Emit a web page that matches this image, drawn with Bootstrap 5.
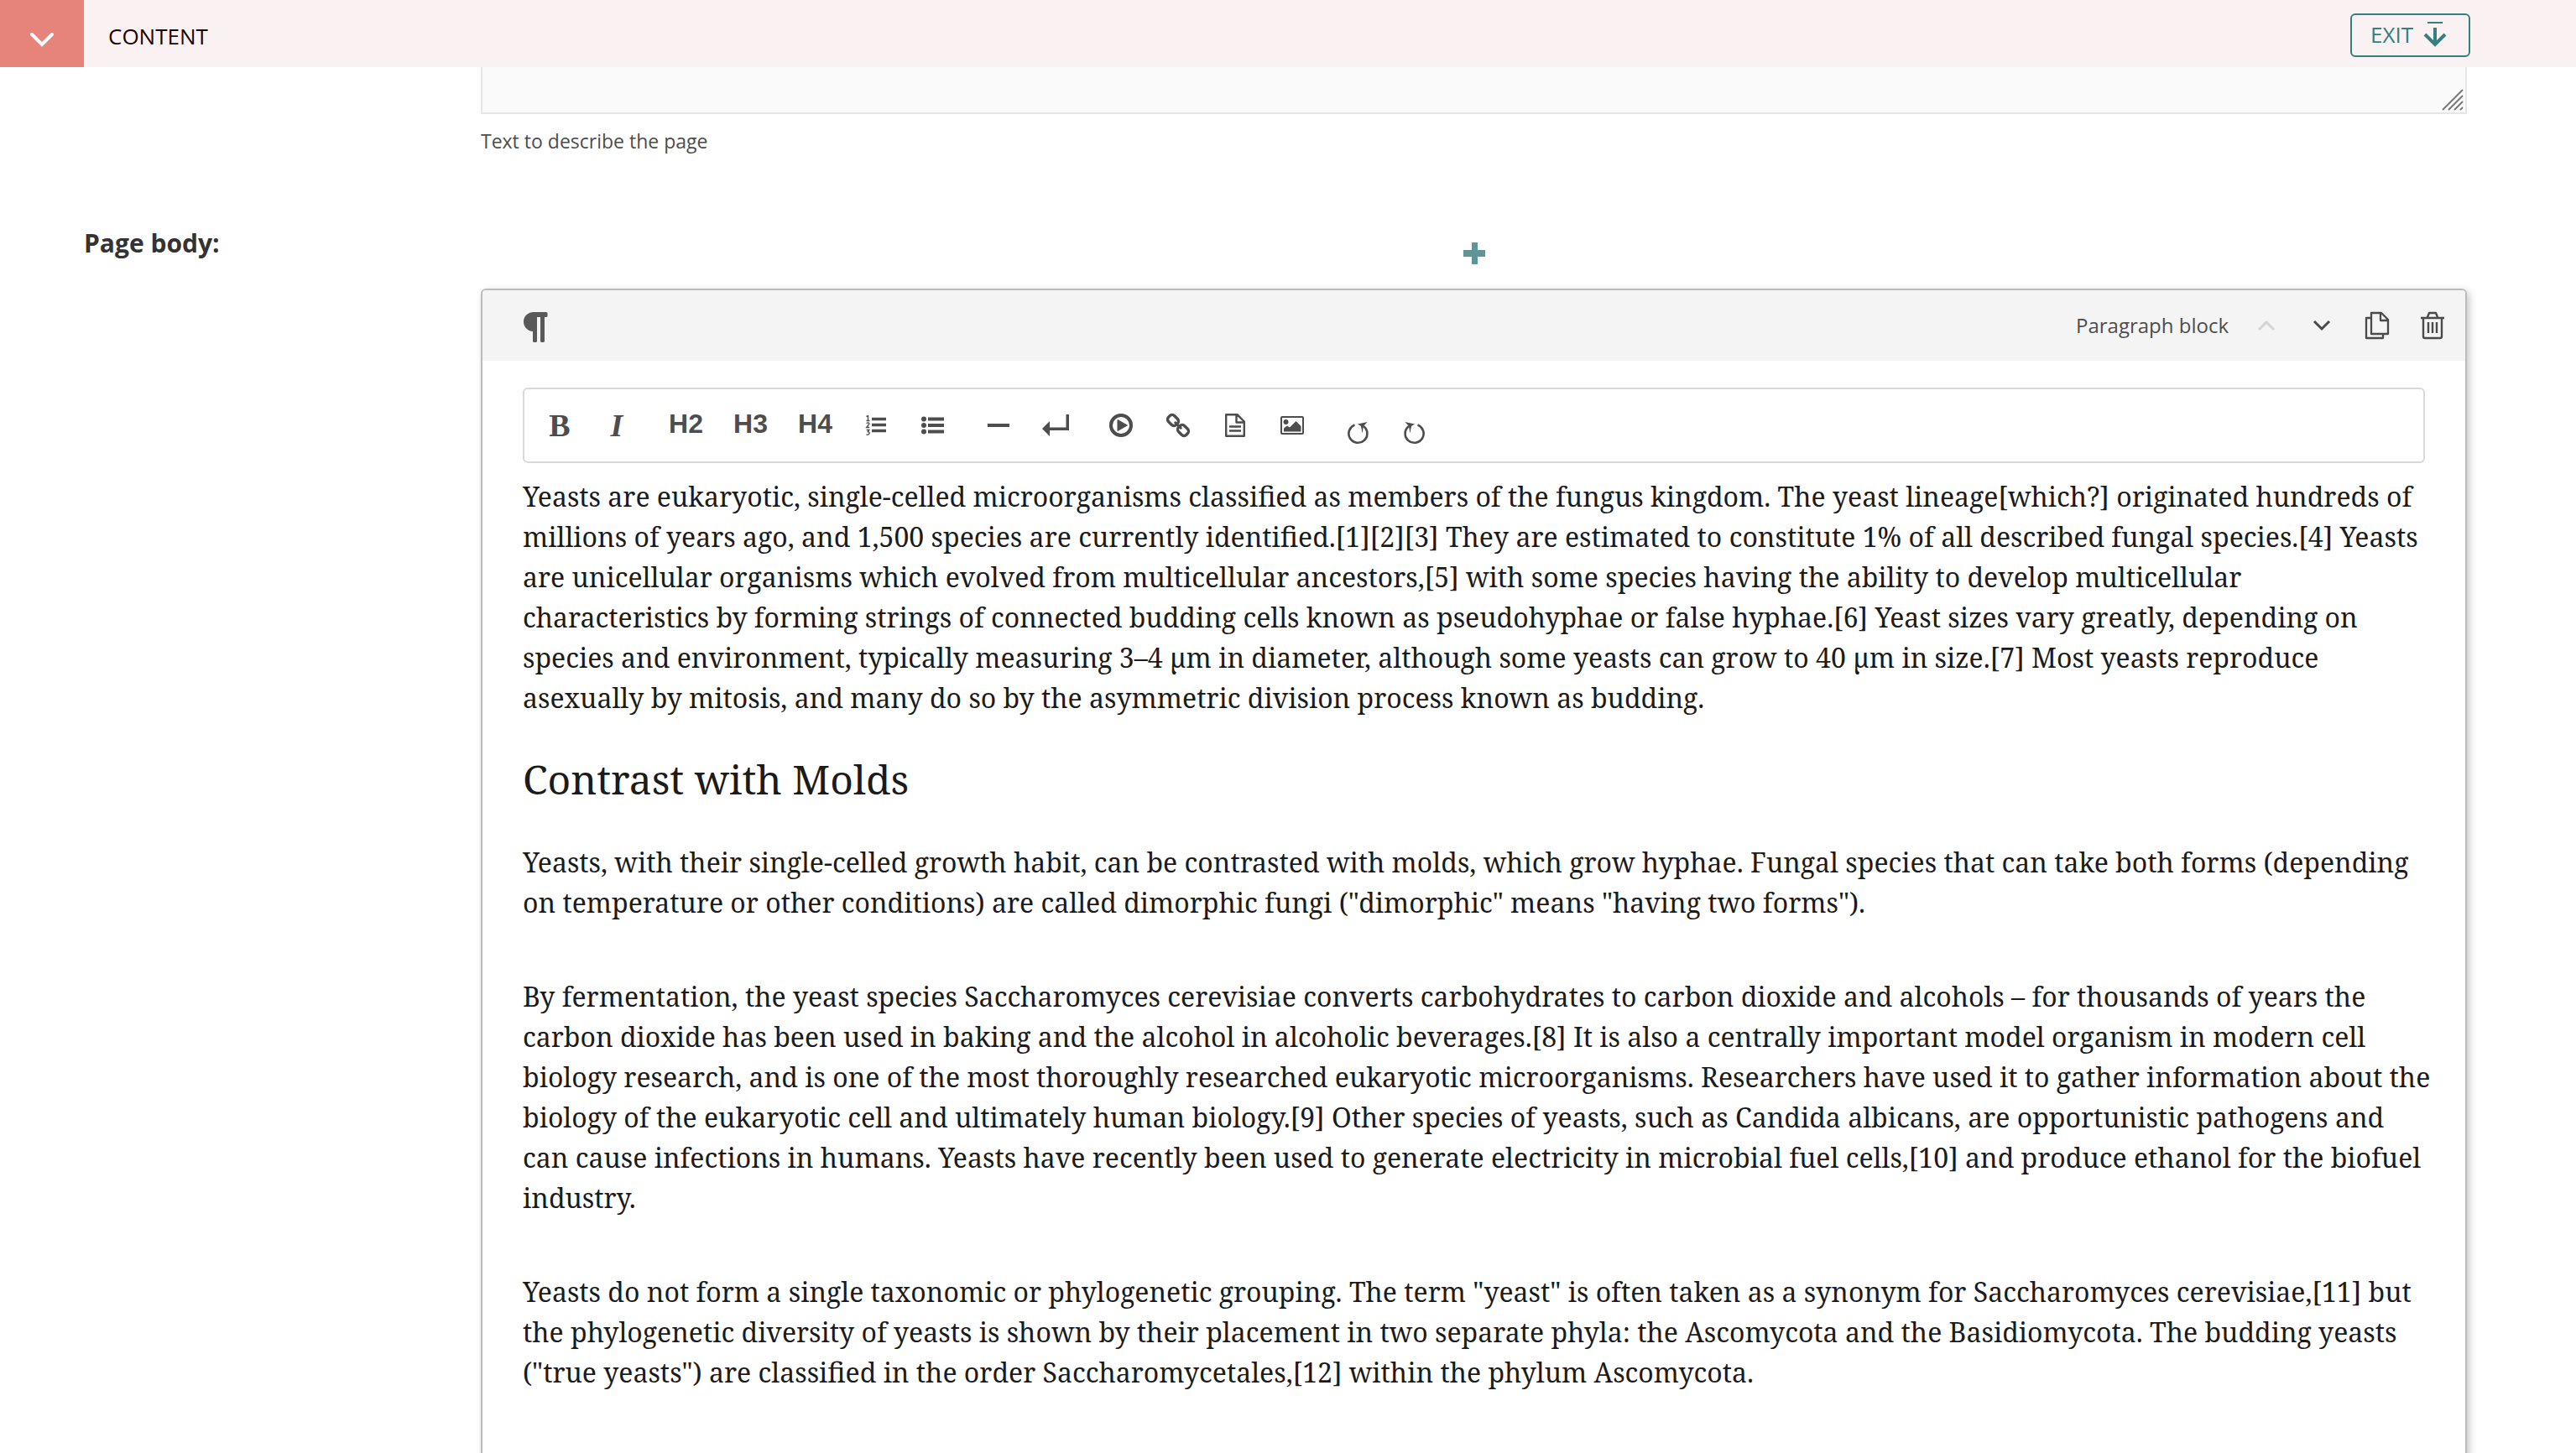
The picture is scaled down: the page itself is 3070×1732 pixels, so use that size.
<!DOCTYPE html>
<html lang="en">
<head>
<meta charset="utf-8">
<meta name="viewport" content="width=device-width, initial-scale=1">
<title>Edit page: Content</title>
<link rel="stylesheet" href="https://cdn.jsdelivr.net/npm/bootstrap@5.3.0/dist/css/bootstrap.min.css">
<style>
  body { font-family: "Open Sans", sans-serif; font-size: 24px; line-height: 36px; color: #4d4d4d; background: #fff; height: 100vh; overflow: hidden; }
  svg { display: block; overflow: visible; }
  .panel-bar { height: 80px; background: #faf1f2; padding-right: 126px; }
  .panel-toggle { --bs-btn-bg: #e6847b; --bs-btn-color: #fff; --bs-btn-hover-bg: #e6847b; --bs-btn-hover-color: #fff; --bs-btn-active-bg: #d9776e; --bs-btn-active-color: #fff; width: 100px; }
  .panel-title { font-size: 26px; color: #1f0300; margin-left: 29px; padding-top: 6px; }
  .exit-btn { --bs-btn-color: #347f80; --bs-btn-border-color: #347f80; --bs-btn-hover-bg: #347f80; --bs-btn-hover-border-color: #347f80;
    height: 52px; border-width: 2px; border-radius: 6px; padding: 0 26px 2px 22px; font-size: 26px; gap: 12px; }
  .editor { padding: 36px 130px 0 100px; }
  .field-label { flex: 0 0 473px; font-size: 30px; line-height: 44px; font-weight: 700; color: #333; }
  .field-main { flex: 1 1 0; min-width: 0; }
  .desc-input { height: 100px; background: #fafafa; border: 2px solid #e6e6e6; border-radius: 0; resize: none; }
  .grip { right: 4px; bottom: 4px; }
  .help { font-size: 23px; margin-top: 14px; }
  .body-row { margin-top: 82px; }
  .add-btn { height: 68px; margin-bottom: 8px; color: #5f9596; }
  .block-card { border: 2px solid #bbb; border-radius: 6px; box-shadow: 3px 3px 10px rgba(0,0,0,.22); padding-bottom: 24px; }
  .block-head { height: 84px; background: #f4f4f4; padding: 0 6px 0 48px; border-radius: 4px 4px 0 0; }
  .head-btn { width: 66px; height: 66px; color: #4a4a4a; }
  .head-btn:disabled { color: #d4d4d4; border: 0; opacity: 1; }
  .block-name { margin-right: 12px; }
  .block-main { padding: 32px 48px 0; }
  .tools { height: 90px; border: 2px solid #d9d9d9; border-radius: 6px; padding: 0 8px; }
  .tool-group { margin-right: 10px; }
  .tool { width: 68px; height: 60px; color: #4d4d4d; }
  .tool-wide { width: 77px; font: 700 32px/40px "Liberation Sans", sans-serif; }
  .tool-serif { font: 700 38px/44px "Liberation Serif", serif; }
  .tool, .head-btn, .add-btn, .panel-toggle { padding: 0; border: 0; border-radius: 0; }
  .tool-wide { padding-bottom: 4px; }
  .prose { font-family: "Roboto Slab", "Noto Serif", "DejaVu Serif Condensed", serif; font-size: 32px; line-height: 48px; color: #1b1b1b; margin-top: 16px; white-space: nowrap; }
  .prose p { margin: 0 0 64px; }
  .prose h2 { font-size: 48px; line-height: 64px; font-weight: 400; margin: 41px 0 43px; }
  .prose p:first-child { margin-bottom: 0; }
</style>
<script src="https://cdn.jsdelivr.net/npm/bootstrap@5.3.0/dist/js/bootstrap.bundle.min.js"></script>
</head>
<body>
<header class="panel-bar fixed-top d-flex align-items-center">
  <button class="panel-toggle btn align-self-stretch d-flex align-items-center justify-content-center" type="button" aria-label="Collapse content panel">
    <svg width="30" height="30" viewBox="0 0 30 30" fill="none" stroke="currentColor" stroke-width="4" stroke-linecap="round" stroke-linejoin="miter"><path d="M3 16 15 28 27 16"/></svg>
  </button>
  <div class="panel-title">CONTENT</div>
  <button class="exit-btn btn btn-outline-primary ms-auto mt-1 d-flex align-items-center" type="button">EXIT
    <svg width="28" height="30" viewBox="0 0 28 30" fill="none" stroke="currentColor"><path stroke-width="2" d="M5 1h18"/><path stroke-width="4" d="M14 7v20M2 15l12 12 12-12"/></svg>
  </button>
</header>

<main class="editor">
  <section class="d-flex">
    <label class="field-label" for="desc" aria-label="Description"></label>
    <div class="field-main">
      <div class="position-relative">
        <textarea class="desc-input form-control" id="desc"></textarea>
        <svg class="grip position-absolute" width="26" height="26" viewBox="0 0 26 26" stroke="#777" stroke-width="2"><path d="M1 25 25 1M8 25 25 8M15 25 25 15M22 25l3-3"/></svg>
      </div>
      <div class="help">Text to describe the page</div>
    </div>
  </section>

  <section class="body-row d-flex">
    <div class="field-label">Page body:</div>
    <div class="field-main">
      <button class="add-btn btn w-100 d-flex align-items-center justify-content-center" type="button" aria-label="Add block">
        <svg width="26" height="26" viewBox="0 0 26 26" fill="currentColor"><path d="M10 0h7v9h9v8h-9v9h-7v-9H0V9h10z"/></svg>
      </button>
      <article class="block-card bg-white">
        <div class="block-head d-flex align-items-center">
          <svg class="mt-1" width="30" height="36" viewBox="0 0 30 36" fill="#595959"><path d="M13 0h15a1.500 1.500 0 0 1 1.500 1.500v3A1.500 1.500 0 0 1 28 6h-2v28.500a1.500 1.500 0 0 1-1.500 1.500h-2a1.500 1.500 0 0 1-1.500-1.500V6h-4v28.500a1.500 1.500 0 0 1-1.500 1.500h-2a1.500 1.500 0 0 1-1.500-1.500V23A11.500 11.500 0 0 1 13 0z"/></svg>
          <div class="block-name ms-auto">Paragraph block</div>
          <button class="head-btn btn d-flex align-items-center justify-content-center" type="button" aria-label="Move up" disabled>
            <svg width="20" height="12" viewBox="0 0 20 12" fill="none" stroke="currentColor" stroke-width="3"><path d="M1 11l9-9 9 9"/></svg>
          </button>
          <button class="head-btn btn d-flex align-items-center justify-content-center" type="button" aria-label="Move down">
            <svg width="20" height="12" viewBox="0 0 20 12" fill="none" stroke="currentColor" stroke-width="3"><path d="M1 1l9 9 9-9"/></svg>
          </button>
          <button class="head-btn btn d-flex align-items-center justify-content-center" type="button" aria-label="Duplicate">
            <svg width="28" height="32" viewBox="0 0 28 32" fill="none" stroke="currentColor" stroke-width="2.300" stroke-linejoin="round"><path d="M7 1h12l8 8v17H7zM18 1v9h9M7 7H1v24h20v-5"/></svg>
          </button>
          <button class="head-btn btn d-flex align-items-center justify-content-center" type="button" aria-label="Delete">
            <svg width="28" height="32" viewBox="0 0 28 32" fill="none" stroke="currentColor" stroke-width="2.400" stroke-linejoin="round"><path d="M0 7h28M3 7v22q0 2 2 2h18q2 0 2-2V7M8 6l2-5h8l2 5M9 12v13M14 12v13M19 12v13"/></svg>
          </button>
        </div>

        <div class="block-main">
          <div class="tools d-flex align-items-center" role="toolbar" aria-label="Text formatting">
            <div class="tool-group d-flex">
              <button class="tool tool-serif btn" type="button" aria-label="Bold">B</button>
              <button class="tool tool-serif btn fst-italic" type="button" aria-label="Italic">I</button>
            </div>
            <div class="tool-group d-flex">
              <button class="tool tool-wide btn" type="button">H2</button>
              <button class="tool tool-wide btn" type="button">H3</button>
              <button class="tool tool-wide btn" type="button">H4</button>
              <button class="tool btn d-flex align-items-center justify-content-center" type="button" aria-label="Numbered list">
                <svg width="24" height="24" viewBox="0 0 24 24" fill="none" stroke="currentColor"><path stroke-width="3.500" d="M7 4.500h17M7 11.500h17M7 18.500h17"/><path stroke-width="1.400" d="M.5 1.500 2.500.8V6.500M.5 6.500h4M.7 9.700q1-1 2-.8 1.500.3 1 1.700L.7 14.500h3.600M.7 17.500h3L2.300 19.600q2 .2 1.800 1.900-.3 2-3.600 1.500"/></svg>
              </button>
              <button class="tool btn d-flex align-items-center justify-content-center" type="button" aria-label="Bulleted list">
                <svg width="28" height="22" viewBox="0 0 28 22" fill="currentColor"><circle cx="3" cy="3.500" r="3"/><circle cx="3" cy="11" r="3"/><circle cx="3" cy="18.500" r="3"/><path d="M8 1.500h19v4H8zM8 9h19v4H8zM8 16.500h19v4H8z"/></svg>
              </button>
            </div>
            <div class="tool-group d-flex">
              <button class="tool btn d-flex align-items-center justify-content-center" type="button" aria-label="Horizontal line">
                <svg width="26" height="4" viewBox="0 0 26 4"><path fill="currentColor" d="M0 0h26v4H0z"/></svg>
              </button>
              <button class="tool btn d-flex align-items-center justify-content-center" type="button" aria-label="Line break">
                <svg width="32" height="26" viewBox="0 0 32 26" fill="currentColor"><path d="M0 17l9-9v7.500h19.500V0H32v19H9v7z"/></svg>
              </button>
            </div>
            <div class="tool-group d-flex">
              <button class="tool btn d-flex align-items-center justify-content-center" type="button" aria-label="Embed">
                <svg width="28" height="28" viewBox="0 0 28 28"><circle cx="14" cy="14" r="12" fill="none" stroke="currentColor" stroke-width="4"/><path fill="currentColor" stroke="currentColor" stroke-linejoin="round" d="M10 7.500v13L21.500 14z"/></svg>
              </button>
              <button class="tool btn d-flex align-items-center justify-content-center" type="button" aria-label="Link">
                <svg width="28" height="28" viewBox="0 0 28 28" fill="none" stroke="currentColor" stroke-width="3.400"><g transform="rotate(45 14 14)"><rect x="-1" y="9" width="13" height="10" rx="4"/><rect x="16" y="9" width="13" height="10" rx="4"/><path stroke-linecap="round" stroke-width="3" d="M9.500 14h9"/></g></svg>
              </button>
              <button class="tool btn d-flex align-items-center justify-content-center" type="button" aria-label="Document link">
                <svg width="24" height="28" viewBox="0 0 24 28" fill="none" stroke="currentColor" stroke-width="2.400" stroke-linejoin="round"><path d="M1.200 1.200h13.300l8.300 8.300v17.300H1.200zM13.500 1.500v9h9M5 15.500h14M5 20.500h14"/></svg>
              </button>
              <button class="tool btn d-flex align-items-center justify-content-center" type="button" aria-label="Image">
                <svg width="28" height="22" viewBox="0 0 28 22"><rect x="1" y="1" width="26" height="20" rx="1" fill="none" stroke="currentColor" stroke-width="2"/><circle cx="6.500" cy="7" r="3" fill="currentColor"/><path fill="currentColor" d="M4 18.500v-4l4-3 3 2L18.500 6 24.500 12v6.500z"/></svg>
              </button>
            </div>
            <div class="tool-group d-flex">
              <button class="tool btn d-flex align-items-center justify-content-center" type="button" aria-label="Undo">
                <svg width="26" height="44" viewBox="0 0 26 44" fill="none" stroke="currentColor" stroke-width="2.600"><path d="M9.500 21.500A11 11 0 1 0 20 23"/><path fill="currentColor" stroke="none" d="M24.500 18 13 20.500l4 2.500 1.500 8.500 1.500-8.500z"/></svg>
              </button>
              <button class="tool btn d-flex align-items-center justify-content-center" type="button" aria-label="Redo">
                <svg width="26" height="44" viewBox="0 0 26 44" fill="none" stroke="currentColor" stroke-width="2.600"><path d="M16.500 21.500A11 11 0 1 1 6 23"/><path fill="currentColor" stroke="none" d="M1.500 18 13 20.500l-4 2.500-1.500 8.500-1.500-8.500z"/></svg>
              </button>
            </div>
          </div>

          <div class="prose" contenteditable="true" role="textbox" aria-multiline="true" aria-label="Paragraph text" spellcheck="false">
            <p>Yeasts are eukaryotic, single-celled microorganisms classified as members of the fungus kingdom. The yeast lineage[which?] originated hundreds of<br>
            millions of years ago, and 1,500 species are currently identified.[1][2][3] They are estimated to constitute 1% of all described fungal species.[4] Yeasts<br>
            are unicellular organisms which evolved from multicellular ancestors,[5] with some species having the ability to develop multicellular<br>
            characteristics by forming strings of connected budding cells known as pseudohyphae or false hyphae.[6] Yeast sizes vary greatly, depending on<br>
            species and environment, typically measuring 3–4 µm in diameter, although some yeasts can grow to 40 µm in size.[7] Most yeasts reproduce<br>
            asexually by mitosis, and many do so by the asymmetric division process known as budding.</p>
            <h2>Contrast with Molds</h2>
            <p>Yeasts, with their single-celled growth habit, can be contrasted with molds, which grow hyphae. Fungal species that can take both forms (depending<br>
            on temperature or other conditions) are called dimorphic fungi ("dimorphic" means "having two forms").</p>
            <p>By fermentation, the yeast species Saccharomyces cerevisiae converts carbohydrates to carbon dioxide and alcohols – for thousands of years the<br>
            carbon dioxide has been used in baking and the alcohol in alcoholic beverages.[8] It is also a centrally important model organism in modern cell<br>
            biology research, and is one of the most thoroughly researched eukaryotic microorganisms. Researchers have used it to gather information about the<br>
            biology of the eukaryotic cell and ultimately human biology.[9] Other species of yeasts, such as Candida albicans, are opportunistic pathogens and<br>
            can cause infections in humans. Yeasts have recently been used to generate electricity in microbial fuel cells,[10] and produce ethanol for the biofuel<br>
            industry.</p>
            <p>Yeasts do not form a single taxonomic or phylogenetic grouping. The term "yeast" is often taken as a synonym for Saccharomyces cerevisiae,[11] but<br>
            the phylogenetic diversity of yeasts is shown by their placement in two separate phyla: the Ascomycota and the Basidiomycota. The budding yeasts<br>
            ("true yeasts") are classified in the order Saccharomycetales,[12] within the phylum Ascomycota.</p>
          </div>
        </div>
      </article>
    </div>
  </section>
</main>
</body>
</html>
